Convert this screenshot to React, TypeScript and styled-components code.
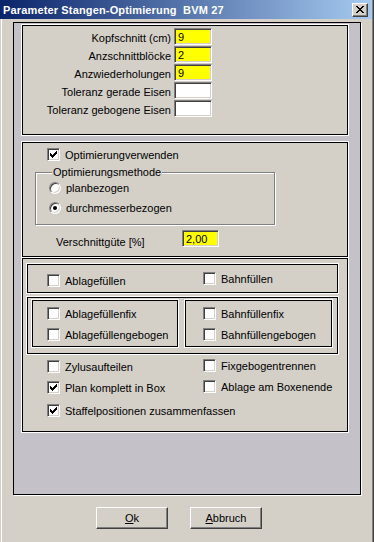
import React from 'react';
import styled, { createGlobalStyle } from 'styled-components';

const GlobalStyle = createGlobalStyle`
  html, body {
    margin: 0;
    padding: 0;
    background: #d4d0c8;
  }
  body {
    font-family: "Liberation Sans", Arial, sans-serif;
    font-size: 11px;
    color: #000;
  }
`;

const Window = styled.div`
  width: 374px;
  height: 542px;
  box-sizing: border-box;
  border-right: 1px solid #404040;
  box-shadow: inset -1px 0 0 #808080;
  background: #d4d0c8;
  display: flex;
  flex-direction: column;
  overflow: hidden;
`;

const TitleBar = styled.div`
  height: 19px;
  margin-right: 1px;
  padding: 0 4px 0 3px;
  display: flex;
  align-items: center;
  justify-content: space-between;
  background: linear-gradient(to right, #0a246a, #a6caf0);
`;

const Title = styled.span`
  color: #fff;
  font-weight: bold;
  font-size: 11px;
  letter-spacing: 0.15px;
  white-space: pre;
`;

const CloseButton = styled.div`
  width: 16px;
  height: 14px;
  box-sizing: border-box;
  background: #d4d0c8;
  border: 1px solid;
  border-color: #fff #404040 #404040 #fff;
  box-shadow: inset -1px -1px 0 #808080;
  display: flex;
  align-items: center;
  justify-content: center;
`;

const Client = styled.div`
  flex: 1;
  margin-left: 1px;
  border-left: 1px solid #fff;
  padding: 3px 0 0 11px;
`;

const Frame = styled.div`
  width: 348px;
  height: 473px;
  box-sizing: border-box;
  border: 1px solid #000;
  box-shadow: 1px 1px 0 #fff;
  background: #c4c2c8;
  padding: 1px 0 0 8px;
`;

const Panel = styled.div<{ $top: number; $height: number }>`
  width: 326px;
  height: ${(p) => p.$height}px;
  margin-top: ${(p) => p.$top}px;
  box-sizing: border-box;
  border: 1px solid #000;
  box-shadow: 0 0 0 1px #fff;
  background: #d4d0c8;
`;

const FieldGrid = styled.div`
  display: grid;
  grid-template-columns: 148px 38px;
  grid-auto-rows: 17px;
  column-gap: 3px;
  row-gap: 1px;
  padding-top: 2px;
`;

const FieldLabel = styled.span`
  text-align: right;
  align-self: center;
  white-space: nowrap;
  margin-top: 2px;
`;

const TextBox = styled.div<{ $yellow?: boolean; $width?: number }>`
  width: ${(p) => p.$width ?? 38}px;
  height: 17px;
  box-sizing: border-box;
  border: 1px solid;
  border-color: #808080 #fff #fff #808080;
  box-shadow: inset 1px 1px 0 #404040, inset -1px -1px 0 #d4d0c8;
  background: ${(p) => (p.$yellow ? '#ffff00' : '#fff')};
  padding: 1px 0 0 3px;
  line-height: 14px;
`;

const CheckRow = styled.label<{ $dy?: number }>`
  display: flex;
  align-items: center;
  gap: 5px;
  white-space: nowrap;
  margin-top: ${(p) => p.$dy ?? 0}px;
`;

const Box = styled.span`
  width: 13px;
  height: 13px;
  flex: none;
  box-sizing: border-box;
  border: 1px solid;
  border-color: #808080 #fff #fff #808080;
  box-shadow: inset 1px 1px 0 #404040, inset -1px -1px 0 #d4d0c8;
  background: #fff;
  display: flex;
  align-items: center;
  justify-content: center;
`;

const Check = ({ checked, label, dy }: { checked?: boolean; label: string; dy?: number }) => (
  <CheckRow $dy={dy}>
    <Box>
      {checked && (
        <svg width="7" height="7" viewBox="0 0 7 7" shapeRendering="crispEdges">
          <path
            d="M6 0h1v3h-1zM5 1h1v3h-1zM4 2h1v3h-1zM3 3h1v3h-1zM2 4h1v3h-1zM1 3h1v3h-1zM0 2h1v3h-1z"
            fill="#000"
          />
        </svg>
      )}
    </Box>
    <span>{label}</span>
  </CheckRow>
);

const RadioCircle = styled.span`
  width: 12px;
  height: 12px;
  flex: none;
  box-sizing: border-box;
  border-radius: 50%;
  border: 1px solid;
  border-color: #808080 #fff #fff #808080;
  box-shadow: inset 1px 1px 0 #404040, inset -1px -1px 0 #d4d0c8;
  background: #fff;
  display: flex;
  align-items: center;
  justify-content: center;
`;

const Dot = styled.span`
  width: 4px;
  height: 4px;
  border-radius: 50%;
  background: #000;
`;

const Radio = ({ checked, label }: { checked?: boolean; label: string }) => (
  <CheckRow>
    <RadioCircle>{checked && <Dot />}</RadioCircle>
    <span>{label}</span>
  </CheckRow>
);

const OptimSection = styled.div`
  padding: 5px 0 0 24px;
`;

const GroupBox = styled.fieldset`
  width: 240px;
  height: 59px;
  box-sizing: border-box;
  margin: 5px 0 0 -12px;
  padding: 4px 0 0 13px;
  border: 1px solid #808080;
  box-shadow: inset 1px 1px 0 #fff, 1px 1px 0 #fff;
  display: flex;
  flex-direction: column;
  gap: 8px;
  min-width: 0;
`;

const Legend = styled.legend`
  padding: 0 1px;
  margin-left: 3px;
  background: #d4d0c8;
`;

const GuteRow = styled.div`
  display: flex;
  align-items: flex-end;
  margin: 5px 0 0 9px;
`;

const GuteLabel = styled.span`
  width: 126px;
  margin-bottom: -1px;
`;

const Inner = styled.div`
  padding: 5px 0 0 4px;
`;

const SubBox = styled.div<{ $width: number; $height: number }>`
  width: ${(p) => p.$width}px;
  height: ${(p) => p.$height}px;
  box-sizing: border-box;
  border: 1px solid #000;
  box-shadow: 0 0 0 1px #fff;
`;

const PairRow = styled.div`
  display: grid;
  grid-template-columns: 156px auto;
  align-items: start;
`;

const BoxA = styled(SubBox)`
  padding: 8px 0 0 19px;
`;

const BoxB = styled(SubBox)`
  margin-top: 4px;
  padding: 2px 0 0 4px;
  display: flex;
  gap: 7px;
`;

const SubCol = styled(SubBox)<{ $pad: number }>`
  padding: 6px 0 0 ${(p) => p.$pad}px;
  display: flex;
  flex-direction: column;
  gap: 8px;
`;

const Options = styled.div`
  padding: 5px 0 0 20px;
  display: flex;
  flex-direction: column;
  gap: 7px;
`;

const ButtonRow = styled.div`
  display: flex;
  gap: 22px;
  margin-top: 12px;
  padding-left: 83px;
`;

const Button = styled.button`
  width: 72px;
  height: 22px;
  box-sizing: border-box;
  padding: 0;
  background: #d4d0c8;
  border: 1px solid;
  border-color: #fff #404040 #404040 #fff;
  box-shadow: inset -1px -1px 0 #808080;
  font-family: "Liberation Sans", Arial, sans-serif;
  font-size: 11px;
  color: #000;
  u {
    text-decoration: underline;
  }
`;

export default function App() {
  return (
    <>
      <GlobalStyle />
      <Window>
        <TitleBar>
          <Title>Parameter Stangen-Optimierung  BVM 27</Title>
          <CloseButton>
            <svg width="8" height="7" viewBox="0 0 8 7" shapeRendering="crispEdges">
              <path
                d="M0 0h2v1h-2zM6 0h2v1h-2zM1 1h2v1h-2zM5 1h2v1h-2zM2 2h4v1h-4zM3 3h2v1h-2zM2 4h4v1h-4zM1 5h2v1h-2zM5 5h2v1h-2zM0 6h2v1h-2zM6 6h2v1h-2z"
                fill="#000"
              />
            </svg>
          </CloseButton>
        </TitleBar>
        <Client>
          <Frame>
            <Panel $top={1} $height={110}>
              <FieldGrid>
                <FieldLabel>Kopfschnitt (cm)</FieldLabel>
                <TextBox $yellow>9</TextBox>
                <FieldLabel>Anzschnittblöcke</FieldLabel>
                <TextBox $yellow>2</TextBox>
                <FieldLabel>Anzwiederholungen</FieldLabel>
                <TextBox $yellow>9</TextBox>
                <FieldLabel>Toleranz gerade Eisen</FieldLabel>
                <TextBox />
                <FieldLabel>Toleranz gebogene Eisen</FieldLabel>
                <TextBox />
              </FieldGrid>
            </Panel>
            <Panel $top={7} $height={115}>
              <OptimSection>
                <Check checked label="Optimierungverwenden" />
                <GroupBox>
                  <Legend>Optimierungsmethode</Legend>
                  <Radio label="planbezogen" />
                  <Radio checked label="durchmesserbezogen" />
                </GroupBox>
                <GuteRow>
                  <GuteLabel>Verschnittgüte [%]</GuteLabel>
                  <TextBox $yellow $width={37}>2,00</TextBox>
                </GuteRow>
              </OptimSection>
            </Panel>
            <Panel $top={1} $height={174}>
              <Inner>
                <BoxA $width={311} $height={29}>
                  <PairRow>
                    <Check label="Ablagefüllen" dy={1} />
                    <Check label="Bahnfüllen" dy={-1} />
                  </PairRow>
                </BoxA>
                <BoxB $width={311} $height={57}>
                  <SubCol $width={146} $height={47} $pad={14}>
                    <Check label="Ablagefüllenfix" />
                    <Check label="Ablagefüllengebogen" />
                  </SubCol>
                  <SubCol $width={147} $height={47} $pad={17}>
                    <Check label="Bahnfüllenfix" />
                    <Check label="Bahnfüllengebogen" />
                  </SubCol>
                </BoxB>
                <Options>
                  <PairRow>
                    <Check label="Zylusaufteilen" dy={1} />
                    <Check label="Fixgebogentrennen" />
                  </PairRow>
                  <PairRow>
                    <Check checked label="Plan komplett in Box" dy={1} />
                    <Check label="Ablage am Boxenende" />
                  </PairRow>
                  <Check checked label="Staffelpositionen zusammenfassen" dy={3} />
                </Options>
              </Inner>
            </Panel>
          </Frame>
          <ButtonRow>
            <Button>
              <u>O</u>k
            </Button>
            <Button>
              <u>A</u>bbruch
            </Button>
          </ButtonRow>
        </Client>
      </Window>
    </>
  );
}
